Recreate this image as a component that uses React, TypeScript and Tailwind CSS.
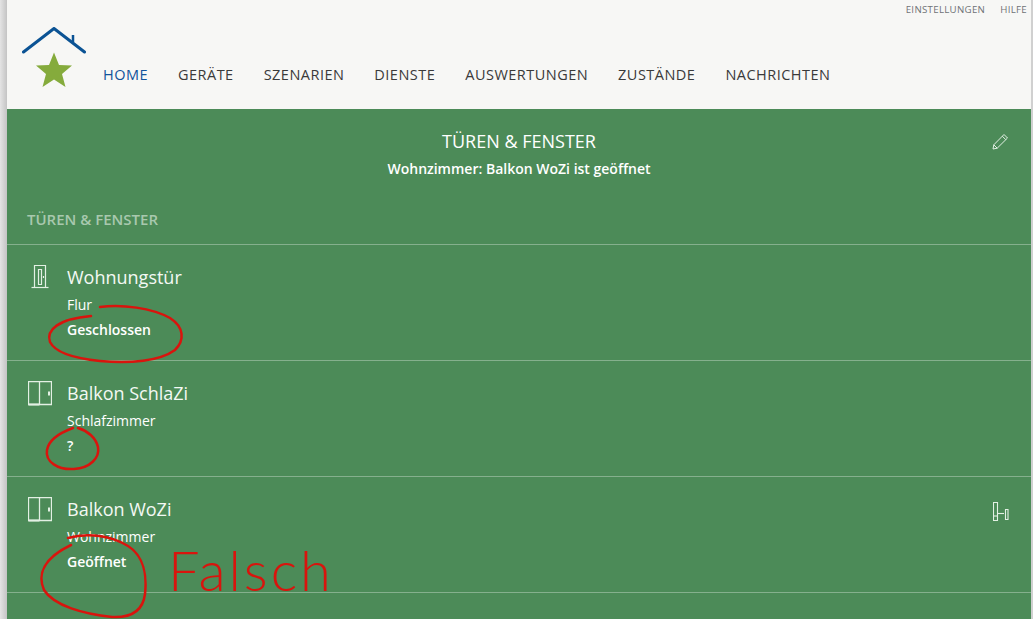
const navItems = ["HOME", "GERÄTE", "SZENARIEN", "DIENSTE", "AUSWERTUNGEN", "ZUSTÄNDE", "NACHRICHTEN"];

function Logo() {
  return (
    <svg width="66" height="62" viewBox="0 0 66 62" fill="none" className="shrink-0">
      <path d="M1.5 25 L32 1.5 L62.5 25" stroke="#0b5394" strokeWidth="3" strokeLinecap="round" strokeLinejoin="round" />
      <path d="M51 15 L51 8" stroke="#0b5394" strokeWidth="2.5" />
      <path d="M32 25.5 L37 38 L50 38.5 L40 47 L43.5 60 L32 52.5 L20.5 60 L24 47 L14 38.5 L27 38 Z" fill="#85ab3c" />
    </svg>
  );
}

function EntryDoorIcon() {
  return (
    <svg width="18" height="24" viewBox="0 0 18 24" fill="none" stroke="#e3f0e4" strokeWidth="1.2">
      <path d="M3.5 22.5 V0.5 H14.5 V22.5" />
      <path d="M0.5 22.5 H17.5" />
      <path d="M7.5 4.5 H10.5 V19.5 H7.5 Z" />
      <path d="M12.5 11 V13" />
    </svg>
  );
}

function BalconyDoorIcon() {
  return (
    <svg width="24" height="25" viewBox="0 0 24 25" fill="none" stroke="#e3f0e4" strokeWidth="1.3">
      <path d="M0.5 0.5 H23.5 V23.5 H0.5 Z" />
      <path d="M11.5 0.5 V23.5" />
      <path d="M0.5 23.5 H11.5" strokeWidth="2" />
      <path d="M21 10.5 V14.5" strokeWidth="2" />
    </svg>
  );
}

function OpenContactIcon() {
  return (
    <svg width="16" height="20" viewBox="0 0 16 20" fill="none" stroke="#e3f0e4" strokeWidth="1.1">
      <path d="M0.5 0.5 H4.5 V18.5 H0.5 Z" />
      <path d="M0.5 14 H4.5" />
      <path d="M4.5 11.5 H11" />
      <path d="M12.5 7.5 H15 V17.5 H12.5 Z" />
    </svg>
  );
}

function PencilIcon() {
  return (
    <svg width="17" height="17" viewBox="0 0 17 17" fill="none" stroke="#e3f0e4" strokeWidth="1" strokeLinejoin="round">
      <path d="M1 16 L1.8 11.8 L12 1.5 L15.5 5 L5.2 15.2 Z" />
      <path d="M10.3 3.2 L13.8 6.7" />
      <path d="M1.8 11.8 L5.2 15.2" />
    </svg>
  );
}

function DeviceRow({ icon, name, room, status, action }: { icon: React.ReactNode; name: string; room: string; status: string; action?: React.ReactNode }) {
  return (
    <div className="h-[116px] flex border-t border-[#85b08d] pl-5 pr-[22px] shrink-0">
      <div className="w-10 pt-[20px] flex justify-start">{icon}</div>
      <div className="flex-1 flex flex-col text-white">
        <div className="mt-[19px] h-[26px] leading-[26px] text-[18px] text-[#f4f9f4]">{name}</div>
        <div className="mt-[5px] h-[20px] leading-[20px] text-[14px]">{room}</div>
        <div className="mt-[5px] h-[20px] leading-[20px] text-[14px] font-semibold">{status}</div>
      </div>
      {action && <div className="pt-[25px]">{action}</div>}
    </div>
  );
}

function Annotations() {
  return (
    <svg width="1033" height="619" viewBox="0 0 1033 619" fill="none" stroke="#d9140d" strokeWidth="2.5" strokeLinecap="round" strokeLinejoin="round" className="absolute left-0 top-0 pointer-events-none">
      <path d="M100 307 C122 304 152 308 170 318 C184 327 185 340 175 350 C160 361 130 364 100 361 C80 359 56 354 50 342 C46 330 58 319 91 316" />
      <path d="M73 428 C62 432 49 438 47 450 C45 462 58 470 74 469 C90 468 100 458 98 447 C96 438 88 431 78 428" />
      <path d="M68 538 C88 532 112 536 128 546 C144 556 147 576 145 594 C143 610 132 618 112 617 C84 614 54 606 44 590 C37 574 44 558 71 545" />
    </svg>
  );
}

export default function App() {
  return (
    <div className="relative w-[1033px] h-[619px] overflow-hidden flex bg-[#d8d8d8] font-['Open_Sans',sans-serif]">
      <div className="w-[7px] shrink-0 bg-gradient-to-r from-[#e4e4e4] to-[#c4c4c4]" />
      <div className="flex-1 flex flex-col min-w-0">
        <header className="h-[109px] shrink-0 bg-[#f7f7f5] relative flex items-start pl-[15px]">
          <div className="absolute right-[4px] top-[3px] flex gap-[15px] text-[9.7px] tracking-[0.3px] leading-[13px] text-[#6f7276]">
            <span>EINSTELLUNGEN</span>
            <span>HILFE</span>
          </div>
          <div className="mt-[27px]"><Logo /></div>
          <nav className="mt-[65px] ml-[15px] flex gap-[30px] text-[14.5px] leading-[20px] tracking-[0.48px] text-[#3a3a3a]">
            {navItems.map((item) => (
              <span key={item} className={item === "HOME" ? "text-[#11539b] font-medium" : ""}>{item}</span>
            ))}
          </nav>
        </header>
        <main className="flex-1 bg-[#4c8b58] flex flex-col min-h-0">
          <div className="relative h-[135px] shrink-0 flex flex-col items-center">
            <h1 className="mt-[19px] h-[26px] leading-[26px] text-[18px] text-white">TÜREN & FENSTER</h1>
            <p className="mt-[5px] h-[20px] leading-[20px] text-[14px] font-semibold text-white">Wohnzimmer: Balkon WoZi ist geöffnet</p>
            <p className="self-start mt-[30px] ml-5 h-[20px] leading-[20px] text-[15px] font-semibold text-[#a8c8ae]">TÜREN & FENSTER</p>
            <div className="absolute right-[22px] top-[24px]"><PencilIcon /></div>
          </div>
          <DeviceRow icon={<div className="pl-[4px]"><EntryDoorIcon /></div>} name="Wohnungstür" room="Flur" status="Geschlossen" />
          <DeviceRow icon={<div className="pl-[1px]"><BalconyDoorIcon /></div>} name="Balkon SchlaZi" room="Schlafzimmer" status="?" />
          <DeviceRow icon={<div className="pl-[1px]"><BalconyDoorIcon /></div>} name="Balkon WoZi" room="Wohnzimmer" status="Geöffnet" action={<OpenContactIcon />} />
          <div className="border-t border-[#85b08d]" />
        </main>
      </div>
      <div className="w-[2px] shrink-0 bg-[#d0d0d0]" />
      <Annotations />
      <span className="absolute left-[168px] top-[530px] text-[56px] leading-[80px] font-light tracking-[3px] text-[#d9140d] font-['Lato',sans-serif]">Falsch</span>
    </div>
  );
}
